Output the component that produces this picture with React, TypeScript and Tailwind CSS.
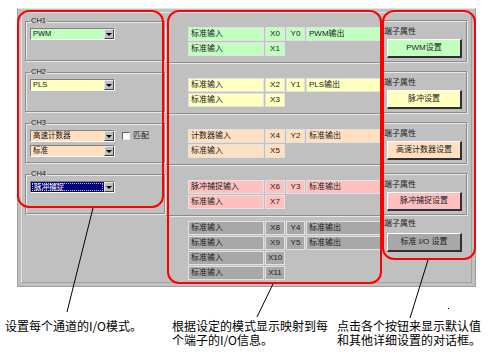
import React from "react";

const UI = "font-['Liberation_Sans','Noto_Sans_CJK_SC',sans-serif]";

const Combo = ({ text, fill, selected }: { text: string; fill: string; selected?: boolean }) => (
  <div className="flex h-[12px] w-[85px] border border-t-[#808080] border-l-[#808080] border-b-white border-r-white">
    <div className={`flex-1 ${fill} p-px`}>
      <div
        className={`h-full text-[7.5px] leading-[8px] pl-px ${
          selected ? "text-white border border-dotted border-[#c0c0c0]" : "text-[#101010]"
        }`}
      >
        {text}
      </div>
    </div>
    <div className="w-[10px] h-[10px] flex items-center justify-center bg-[#c0c0c0] border border-t-[#e8e8e8] border-l-[#e8e8e8] border-b-[#404040] border-r-[#404040]">
      <div className="w-0 h-0 border-l-[3px] border-r-[3px] border-t-[3px] border-l-transparent border-r-transparent border-t-black" />
    </div>
  </div>
);

const Group = ({ label, children }: { label: string; children: React.ReactNode }) => (
  <fieldset className="ml-px mt-px w-[140px] h-[46px] border border-[#8c8c8c] shadow-[inset_1px_1px_0_#e8e8e8,1px_1px_0_#e8e8e8] pl-[4px]">
    <legend className="px-px text-[7.5px] leading-[12px] text-[#202020]">{label}</legend>
    {children}
  </fieldset>
);

type CellData = { name: string; x: string; y?: string; out?: string };

const Cell = ({ children, fill, center }: { children: React.ReactNode; fill: string; center?: boolean }) => (
  <div
    className={`h-[14px] border border-[#e2e2e2] ${fill} text-[8px] leading-[12px] text-[#202020] whitespace-nowrap overflow-hidden ${
      center ? "text-center" : "pl-[2px]"
    }`}
  >
    {children}
  </div>
);

const Cells = ({ rows, fill }: { rows: CellData[]; fill: string }) => (
  <div className="ml-[22px] grid grid-cols-[76px_20px_19px_75px] gap-px">
    {rows.map((r) => (
      <React.Fragment key={r.x}>
        <Cell fill={fill}>{r.name}</Cell>
        <Cell fill={fill} center>
          {r.x}
        </Cell>
        {r.y ? (
          <>
            <Cell fill={fill} center>
              {r.y}
            </Cell>
            <Cell fill={fill}>{r.out}</Cell>
          </>
        ) : (
          <div className="col-span-2" />
        )}
      </React.Fragment>
    ))}
  </div>
);

const SetButton = ({ text, fill }: { text: string; fill: string }) => (
  <div
    className={`w-[75px] h-[19px] ${fill} border border-t-white border-l-white border-b-2 border-r-2 border-b-[#303030] border-r-[#303030] text-[8px] leading-[16px] text-center text-[#202020]`}
  >
    {text}
  </div>
);

const sections = [
  {
    ch: "CH1",
    combos: [{ text: "PWM", fill: "bg-[#c0ffc0]" }],
    fill: "bg-[#c0ffc0]",
    rows: [
      { name: "标准输入", x: "X0", y: "Y0", out: "PWM输出" },
      { name: "标准输入", x: "X1" },
    ],
    button: "PWM设置",
  },
  {
    ch: "CH2",
    combos: [{ text: "PLS", fill: "bg-[#ffffc0]" }],
    fill: "bg-[#ffffc0]",
    rows: [
      { name: "标准输入", x: "X2", y: "Y1", out: "PLS输出" },
      { name: "标准输入", x: "X3" },
    ],
    button: "脉冲设置",
  },
  {
    ch: "CH3",
    combos: [
      { text: "高速计数器", fill: "bg-[#ffe0c0]" },
      { text: "标准", fill: "bg-[#ffe0c0]" },
    ],
    fill: "bg-[#ffe0c0]",
    rows: [
      { name: "计数器输入", x: "X4", y: "Y2", out: "标准输出" },
      { name: "标准输入", x: "X5" },
    ],
    button: "高速计数器设置",
  },
  {
    ch: "CH4",
    combos: [{ text: "脉冲捕捉", fill: "bg-[#000080]", selected: true }],
    fill: "bg-[#ffc0c0]",
    rows: [
      { name: "脉冲捕捉输入", x: "X6", y: "Y3", out: "标准输出" },
      { name: "标准输入", x: "X7" },
    ],
    button: "脉冲捕捉设置",
  },
];

export default function App() {
  return (
    <div className={`relative w-[494px] h-[359px] bg-white overflow-hidden ${UI}`}>
      <div className="ml-[17px] pt-[8px]">
        <div className="w-[459px] h-[279px] bg-[#c0c0c0] border border-[#a0a0a0] border-t-[#e4e4e4] p-[3px]">
          <div className="h-full border border-[#e4e4e4] border-r-[#a0a0a0] border-b-[#a0a0a0] pt-px pl-[2px]">
            {sections.map((s, i) => (
              <div key={s.ch} className="flex h-[51px]">
                <div className="w-[142px]">
                  <Group label={s.ch}>
                    <div className="flex items-center mt-px">
                      <Combo {...s.combos[0]} />
                      {i === 2 && (
                        <div className="flex items-center ml-[7px]">
                          <div className="w-[8px] h-[8px] bg-white border border-t-[#606060] border-l-[#606060] border-b-[#e8e8e8] border-r-[#e8e8e8]" />
                          <span className="ml-[3px] text-[8px] leading-[10px] text-[#202020]">匹配</span>
                        </div>
                      )}
                    </div>
                    {s.combos[1] && (
                      <div className="mt-[3px]">
                        <Combo {...s.combos[1]} />
                      </div>
                    )}
                  </Group>
                </div>
                <div className="w-[216px] pt-[13px] border-b border-[#8c8c8c] shadow-[0_1px_0_#e8e8e8] h-[49px]">
                  <Cells rows={s.rows} fill={s.fill} />
                </div>
                <div className="w-[88px]">
                  <div className="mt-[6px] w-[85px] h-[42px] border border-[#8c8c8c] shadow-[inset_1px_1px_0_#e8e8e8,1px_1px_0_#e8e8e8] pt-[5px]">
                    <div className="ml-px text-[8px] leading-[12px] text-[#202020]">端子属性</div>
                    <div className="ml-[4px] mt-px">
                      <SetButton text={s.button} fill={s.fill} />
                    </div>
                  </div>
                </div>
              </div>
            ))}
            <div className="flex">
              <div className="w-[142px]" />
              <div className="w-[216px] pt-[3px]">
                <Cells
                  fill="bg-[#a8a8a8]"
                  rows={[
                    { name: "标准输入", x: "X8", y: "Y4", out: "标准输出" },
                    { name: "标准输入", x: "X9", y: "Y5", out: "标准输出" },
                    { name: "标准输入", x: "X10" },
                    { name: "标准输入", x: "X11" },
                  ]}
                />
              </div>
              <div className="w-[88px]">
                <div className="ml-[2px] text-[8px] leading-[12px] text-[#202020]">端子属性</div>
                <div className="ml-[5px] mt-[3px]">
                  <SetButton text="标准 I/O 设置" fill="bg-[#a8a8a8]" />
                </div>
              </div>
            </div>
          </div>
        </div>
      </div>

      <div className="flex mt-[32px] text-[12px] leading-[14px] text-black font-['Noto_Sans_CJK_SC',sans-serif] whitespace-nowrap">
        <div className="w-[172px] pl-[5px]">设置每个通道的I/O模式。</div>
        <div className="w-[165px]">
          <div>根据设定的模式显示映射到每</div>
          <div>个端子的I/O信息。</div>
        </div>
        <div>
          <div>点击各个按钮来显示默认值</div>
          <div>和其他详细设置的对话框。</div>
        </div>
      </div>

      <svg className="absolute inset-0 pointer-events-none" width="494" height="359" viewBox="0 0 494 359">
        <g fill="none" stroke="#ff0000" strokeWidth="2">
          <rect x="18" y="11" width="145" height="196" rx="11" />
          <rect x="168" y="11" width="213" height="272" rx="11" />
          <rect x="383" y="11" width="92" height="248" rx="11" />
        </g>
        <g stroke="#000" strokeWidth="1">
          <line x1="93" y1="208" x2="67" y2="312" />
          <line x1="273" y1="284" x2="257" y2="317" />
          <line x1="428" y1="260" x2="410" y2="318" />
        </g>
        <rect x="448" y="308" width="1" height="1" fill="#000" />
      </svg>
    </div>
  );
}
